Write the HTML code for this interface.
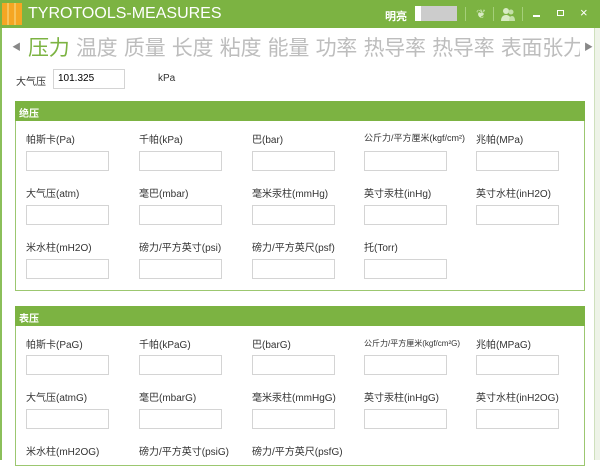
<!DOCTYPE html><html><head><meta charset="utf-8"><style>
*{margin:0;padding:0;box-sizing:border-box}
body{width:600px;height:460px;overflow:hidden;background:#fff;font-family:"Liberation Sans","Noto Sans CJK SC",sans-serif;position:relative}
.a{position:absolute}
.lb{position:absolute;font-size:10px;color:#333;white-space:nowrap}
.in{position:absolute;width:83px;height:20px;border:1px solid #d4d4d4;background:#fff}
.hd{position:absolute;left:15px;width:570px;height:20px;background:#7cb342;color:#fff;font-size:10px;font-weight:bold;padding:4px 0 0 4px}
.bx{position:absolute;left:15px;width:570px;border:1px solid #9cc770}
</style></head><body>
<div class="a" style="left:0;top:0;width:600px;height:28px;background:#7cb342"></div>
<div class="a" style="left:2px;top:3px;width:20px;height:22px;background:linear-gradient(90deg,#f5a623 0 25%,#f7c35a 25% 35%,#f5a623 35% 60%,#f7c35a 60% 70%,#f5a623 70%)"></div>
<div class="a" style="left:28px;top:5px;color:#fff;font-size:16px">TYROTOOLS-MEASURES</div>
<div class="a" style="left:385px;top:8px;color:#fff;font-size:11px;font-weight:bold">明亮</div>
<div class="a" style="left:415px;top:6px;width:42px;height:15px;background:#ccc;border-left:6px solid #fff"></div>
<div class="a" style="left:465px;top:7px;width:1px;height:14px;background:#a5cf7a"></div>
<div class="a" style="left:476px;top:7px;color:#d8ebc4;font-size:12px">❦</div>
<div class="a" style="left:493px;top:7px;width:1px;height:14px;background:#a5cf7a"></div>
<svg class="a" style="left:500px;top:6px" width="16" height="16" viewBox="0 0 16 16"><circle cx="6" cy="5" r="3" fill="#d8ebc4"/><path d="M1 15c0-4 2-6 5-6s5 2 5 6z" fill="#d8ebc4"/><circle cx="11" cy="6" r="2.5" fill="#c4e0a8"/><path d="M9 15c0-3 1-5 3-5s3 2 3 5z" fill="#c4e0a8"/></svg>
<div class="a" style="left:522px;top:7px;width:1px;height:14px;background:#a5cf7a"></div>
<div class="a" style="left:533px;top:15px;width:7px;height:2px;background:#fff"></div>
<div class="a" style="left:557px;top:10px;width:7px;height:6px;border:1px solid #fff"></div>
<div class="a" style="left:580px;top:5px;color:#fff;font-size:13px">×</div>
<div class="a" style="left:0;top:28px;width:2px;height:432px;background:#8bbf5a"></div>
<div class="a" style="left:594px;top:28px;width:6px;height:432px;background:#eef3e8;border-left:1px solid #cfe0bd"></div>
<div class="a" style="left:12px;top:40px;color:#888;font-size:9px">◀</div>
<div class="a" style="left:28px;top:32px;font-size:21px;white-space:nowrap;color:#bdbdbd;letter-spacing:-0.3px;word-spacing:1px"><span style="color:#7cb342">压力</span> 温度 质量 长度 粘度 能量 功率 热导率 热导率 表面张力</div>
<div class="a" style="left:580px;top:28px;width:14px;height:32px;background:#fff"></div>
<div class="a" style="left:584px;top:40px;color:#888;font-size:9px">▶</div>
<div class="lb" style="left:16px;top:73px">大气压</div>
<div class="in" style="left:53px;top:69px;width:72px;height:20px;padding:3px 4px;font-size:10px">101.325</div>
<div class="lb" style="left:158px;top:73px">kPa</div>

<div class="bx" style="top:101px;height:190px"></div>
<div class="hd" style="top:101px">绝压</div>
<div class="bx" style="top:306px;height:160px"></div>
<div class="hd" style="top:306px">表压</div>

<div class="lb" style="left:26px;top:131px">帕斯卡(Pa)</div><div class="lb" style="left:139px;top:131px">千帕(kPa)</div><div class="lb" style="left:252px;top:131px">巴(bar)</div><div class="lb" style="left:364px;top:131px;font-size:9px">公斤力/平方厘米(kgf/cm²)</div><div class="lb" style="left:476px;top:131px">兆帕(MPa)</div>
<div class="in" style="left:26px;top:151px"></div><div class="in" style="left:139px;top:151px"></div><div class="in" style="left:252px;top:151px"></div><div class="in" style="left:364px;top:151px"></div><div class="in" style="left:476px;top:151px"></div>
<div class="lb" style="left:26px;top:185px">大气压(atm)</div><div class="lb" style="left:139px;top:185px">毫巴(mbar)</div><div class="lb" style="left:252px;top:185px">毫米汞柱(mmHg)</div><div class="lb" style="left:364px;top:185px">英寸汞柱(inHg)</div><div class="lb" style="left:476px;top:185px">英寸水柱(inH2O)</div>
<div class="in" style="left:26px;top:205px"></div><div class="in" style="left:139px;top:205px"></div><div class="in" style="left:252px;top:205px"></div><div class="in" style="left:364px;top:205px"></div><div class="in" style="left:476px;top:205px"></div>
<div class="lb" style="left:26px;top:239px">米水柱(mH2O)</div><div class="lb" style="left:139px;top:239px">磅力/平方英寸(psi)</div><div class="lb" style="left:252px;top:239px">磅力/平方英尺(psf)</div><div class="lb" style="left:364px;top:239px">托(Torr)</div>
<div class="in" style="left:26px;top:259px"></div><div class="in" style="left:139px;top:259px"></div><div class="in" style="left:252px;top:259px"></div><div class="in" style="left:364px;top:259px"></div>

<div class="lb" style="left:26px;top:336px">帕斯卡(PaG)</div><div class="lb" style="left:139px;top:336px">千帕(kPaG)</div><div class="lb" style="left:252px;top:336px">巴(barG)</div><div class="lb" style="left:364px;top:338px;font-size:8px">公斤力/平方厘米(kgf/cm²G)</div><div class="lb" style="left:476px;top:336px">兆帕(MPaG)</div>
<div class="in" style="left:26px;top:355px"></div><div class="in" style="left:139px;top:355px"></div><div class="in" style="left:252px;top:355px"></div><div class="in" style="left:364px;top:355px"></div><div class="in" style="left:476px;top:355px"></div>
<div class="lb" style="left:26px;top:389px">大气压(atmG)</div><div class="lb" style="left:139px;top:389px">毫巴(mbarG)</div><div class="lb" style="left:252px;top:389px">毫米汞柱(mmHgG)</div><div class="lb" style="left:364px;top:389px">英寸汞柱(inHgG)</div><div class="lb" style="left:476px;top:389px">英寸水柱(inH2OG)</div>
<div class="in" style="left:26px;top:409px"></div><div class="in" style="left:139px;top:409px"></div><div class="in" style="left:252px;top:409px"></div><div class="in" style="left:364px;top:409px"></div><div class="in" style="left:476px;top:409px"></div>
<div class="lb" style="left:26px;top:443px">米水柱(mH2OG)</div><div class="lb" style="left:139px;top:443px">磅力/平方英寸(psiG)</div><div class="lb" style="left:252px;top:443px">磅力/平方英尺(psfG)</div>
</body></html>
